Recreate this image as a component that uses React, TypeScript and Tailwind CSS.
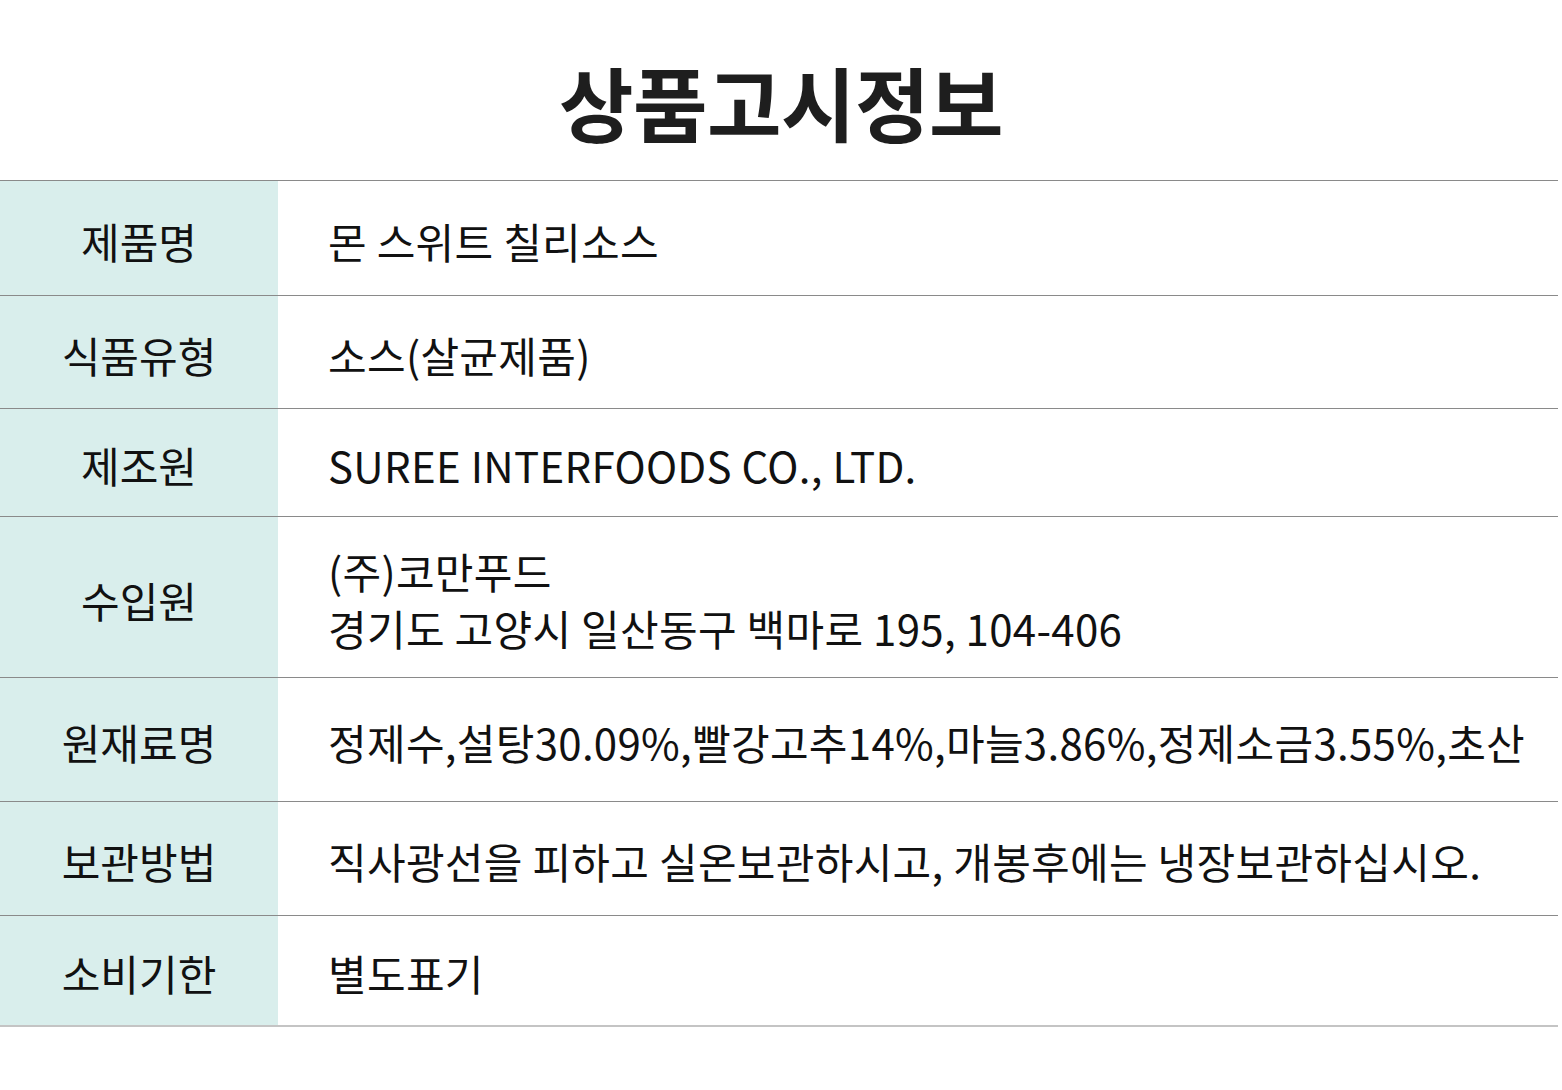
const rows = [
  { label: "제품명", h: "h-[115px]", value: ["몬 스위트 칠리소스"] },
  { label: "식품유형", h: "h-[113px]", value: ["소스(살균제품)"] },
  { label: "제조원", h: "h-[108px]", value: ["SUREE INTERFOODS CO., LTD."] },
  {
    label: "수입원",
    h: "h-[161px]",
    value: ["(주)코만푸드", "경기도 고양시 일산동구 백마로 195, 104-406"],
  },
  {
    label: "원재료명",
    h: "h-[124px]",
    value: ["정제수,설탕30.09%,빨강고추14%,마늘3.86%,정제소금3.55%,초산"],
  },
  {
    label: "보관방법",
    h: "h-[114px]",
    value: ["직사광선을 피하고 실온보관하시고, 개봉후에는 냉장보관하십시오."],
  },
  { label: "소비기한", h: "h-[111px]", value: ["별도표기"] },
]

export default function App() {
  return (
    <div className="min-h-[1090px] w-[1562px] bg-white font-['Noto_Sans_CJK_KR','Noto_Sans',sans-serif] text-[#111]">
      <h1 className="flex h-[180px] items-center justify-center pt-[22px] text-[81px] font-bold tracking-[-0.5px] text-[#1e1e1e]">
        상품고시정보
      </h1>

      <div className="w-[1558px] border-t border-[#8a8a8a]">
        {rows.map((row, i) => (
          <div
            key={row.label}
            className={`flex ${row.h} ${
              i === rows.length - 1
                ? "border-b-2 border-[#c4c4c4]"
                : "border-b border-[#8a8a8a]"
            }`}
          >
            <div className="flex w-[278px] shrink-0 items-center justify-center bg-[#d9eeec] pt-[4px] text-[42px]">
              {row.label}
            </div>
            <div className="flex flex-col justify-center whitespace-nowrap pl-[50px] pt-[4px] text-[42px] leading-[57px] tracking-[0.3px]">
              {row.value.map((line) => (
                <span key={line}>{line}</span>
              ))}
            </div>
          </div>
        ))}
      </div>
    </div>
  )
}
